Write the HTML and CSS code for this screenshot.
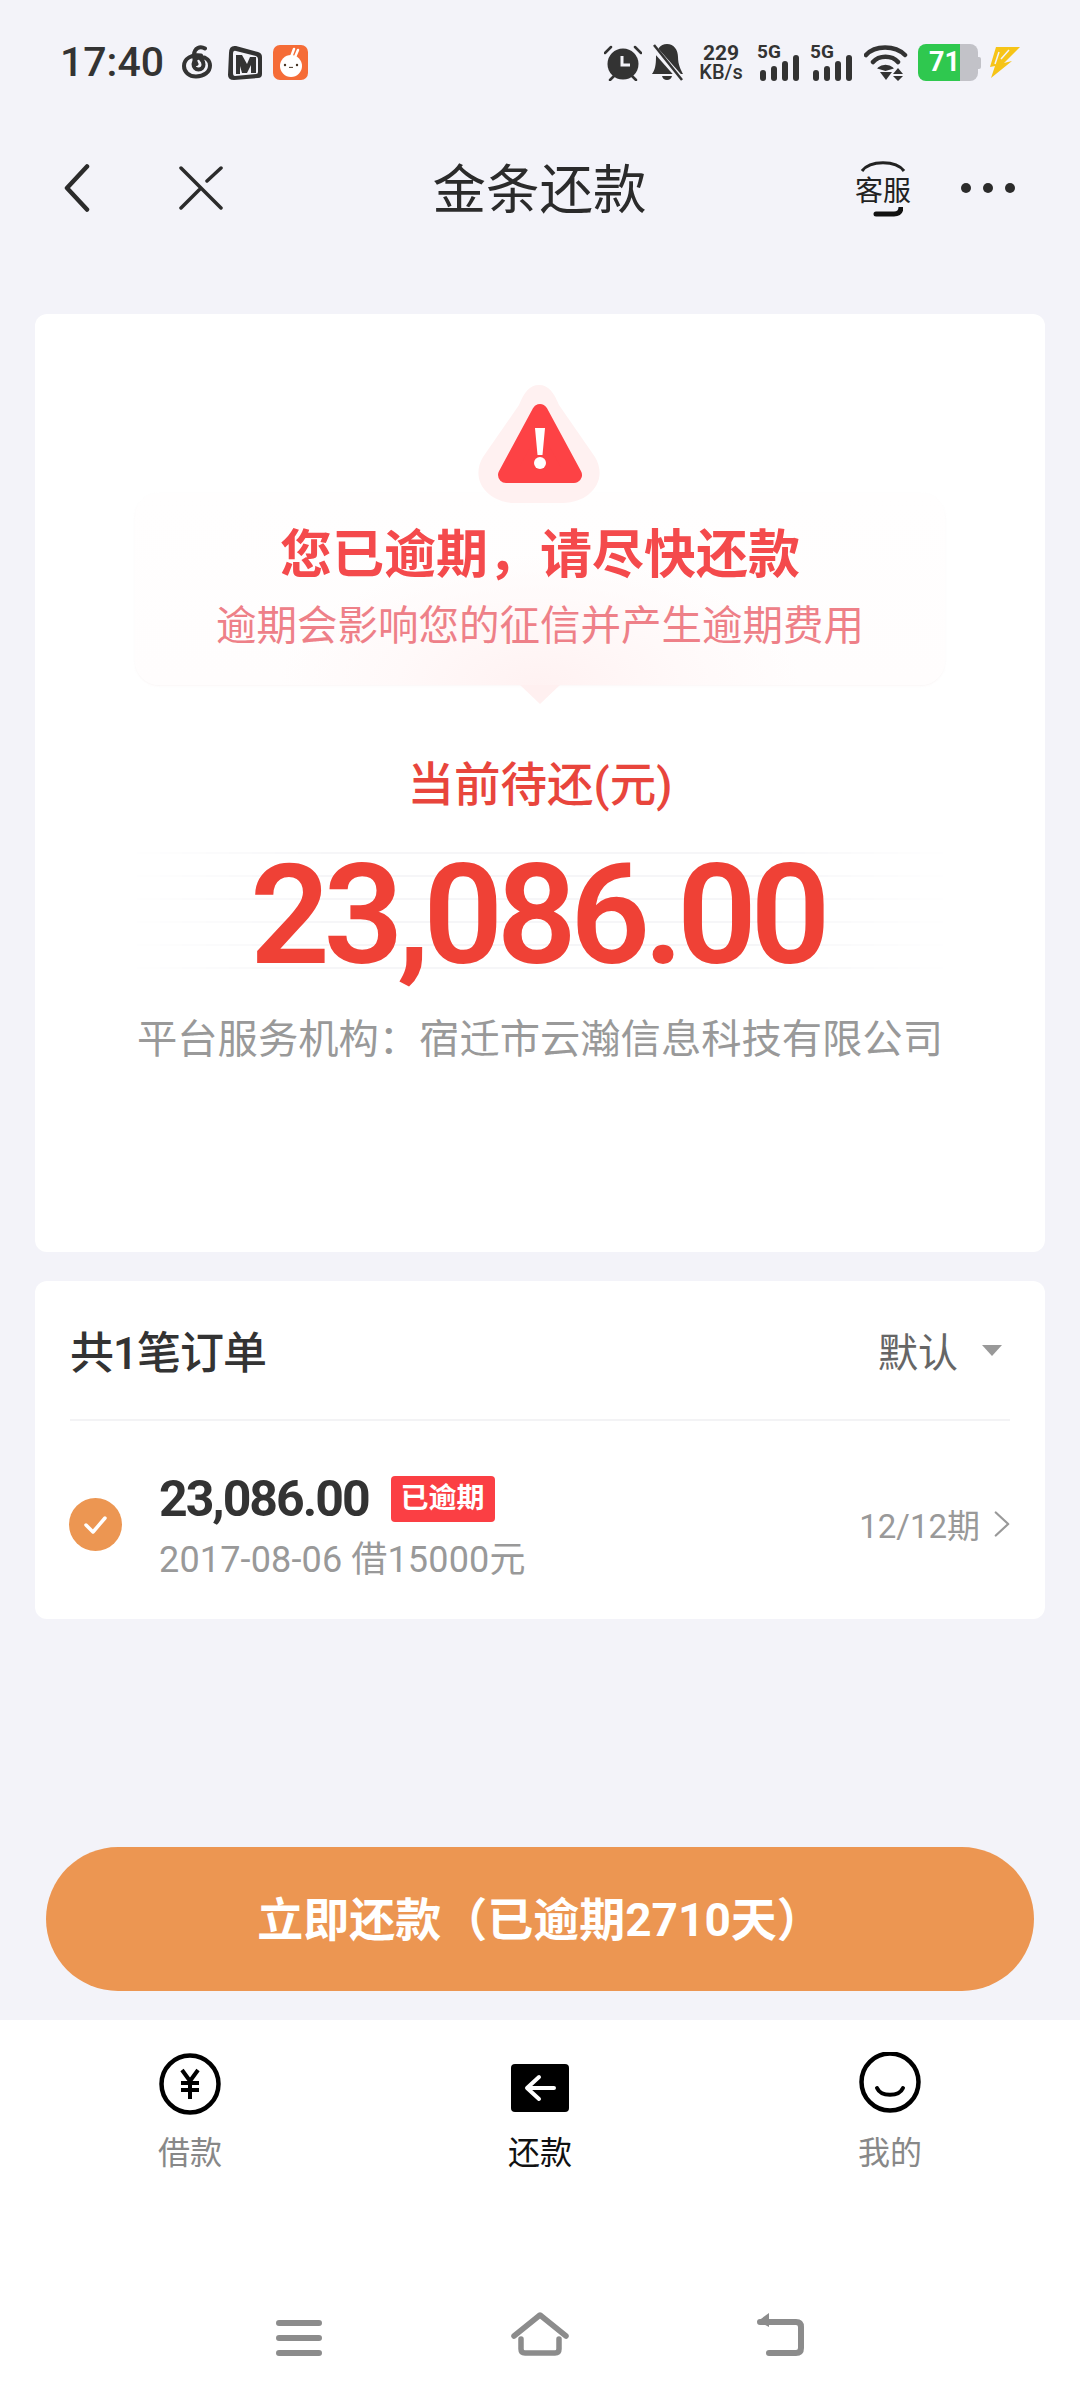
FILE: index.html
```html
<!DOCTYPE html>
<html lang="zh-CN">
<head>
<meta charset="utf-8">
<title>金条还款</title>
<link rel="stylesheet" href="styles.css">
</head>
<body>
<div class="page">
  <header class="status">
    <div class="status-left">
      <span class="time">17:40</span>
      <svg class="ic-swirl" viewBox="0 0 33 34"><path d="M24 3.500C19 .5 13.500 3 13 9.500c-.3 3.500 1 7 2.500 9.500M20 10.500C11 9 3 13.500 3 21c0 6 5 10.500 12 10.500 8 0 14-4.500 14-11 0-5-4-8.500-8.500-8.500-4.500 0-8 3-8 7 0 3 2 5.500 5 5.500s5-2 5-5c0-2-1-4-2.500-5.500" fill="none" stroke="#333" stroke-width="4" stroke-linecap="round"/></svg>
      <svg class="ic-mango" viewBox="0 0 35 35"><path d="M2 8Q2 0 9 1L31 7Q35 8 35 12V29Q35 33 31 33L7 35Q1 35 1 30Z" fill="#333"/><path d="M6 9Q6 5 9 6L29 11Q31 12 31 14V27Q31 29 29 29L8 31Q6 31 6 28Z" fill="#f3f3f9"/><path d="M9 10h6l5 9 3-7h6v16h-5v-8l-4 8-5 0-2-7v8H9Z" fill="#333"/></svg>
      <svg class="ic-rabbit" viewBox="0 0 35 35"><rect width="35" height="35" rx="7" fill="#f56c37"/><path d="M18 12 21 4M22 12 25 5" stroke="#fff" stroke-width="2.500" stroke-linecap="round"/><circle cx="18" cy="21" r="11" fill="#fff"/><circle cx="12" cy="20" r="1.200" fill="#432"/><circle cx="24" cy="20" r="1.200" fill="#432"/><path d="M16 22q1 1.500 2 0q1 1.500 2 0" stroke="#432" fill="none"/></svg>
    </div>
    <div class="status-right">
      <svg class="ic-alarm" viewBox="0 0 38 37"><circle cx="19" cy="20" r="15.500" fill="#333"/><path d="M1 9 7 3M37 9 31 3M6 36l4-4M32 36l-4-4" stroke="#333" stroke-width="2.500" stroke-linecap="round"/><path d="M18 12v9h8" stroke="#f3f3f9" stroke-width="3" fill="none"/></svg>
      <svg class="ic-bell" viewBox="0 0 32 37"><path d="M16 0c7 0 11 6 11 13 0 8 3 13 5 17H1c3-4 4-9 4-17C5 6 9 0 16 0ZM11 32h10q-1 4-5 4t-5-4Z" fill="#333"/><path d="M1 2 31 36" stroke="#f3f3f9" stroke-width="6"/><path d="M3 1 31 36" stroke="#333" stroke-width="2.500"/></svg>
      <div class="speed"><span class="speed-num">229</span><span class="speed-unit">KB/s</span></div>
      <div class="sim">
        <span class="sim-label">5G</span>
        <svg class="ic-bars" viewBox="0 0 40 26"><rect x="0" y="15" width="6" height="11" rx="3" fill="#333"/><rect x="11" y="11" width="6" height="15" rx="3" fill="#333"/><rect x="22" y="6" width="6" height="20" rx="3" fill="#333"/><rect x="33" y="0" width="6" height="26" rx="3" fill="#333"/></svg>
      </div>
      <div class="sim">
        <span class="sim-label">5G</span>
        <svg class="ic-bars" viewBox="0 0 40 26"><rect x="0" y="15" width="6" height="11" rx="3" fill="#333"/><rect x="11" y="11" width="6" height="15" rx="3" fill="#333"/><rect x="22" y="6" width="6" height="20" rx="3" fill="#333"/><rect x="33" y="0" width="6" height="26" rx="3" fill="#333"/></svg>
      </div>
      <svg class="ic-wifi" viewBox="0 0 44 37"><path d="M2 11C11 1 31 1 41 11M9 18C15 11 28 11 34 18" fill="none" stroke="#333" stroke-width="4.500" stroke-linecap="round"/><path d="M15 24C18 21 25 21 28 24L21.500 26Z" fill="#333" stroke="#333" stroke-width="2"/><path d="M16 28h12l-6 8ZM34 24l-5 6h10ZM34 37l-5-5h10Z" fill="#333"/></svg>
      <div class="battery"><span class="bat-level"><span class="bat-text">71</span></span><span class="bat-rest"></span><span class="bat-nub"></span></div>
      <svg class="ic-bolt" viewBox="0 0 30 32"><path d="M6 0H30L14 16 22 14 1 31 5 19 0 20Z" fill="#f6c417"/><path d="M9 5 5 17M19 3 11 12" stroke="#f3f3f9" stroke-width="1.500"/></svg>
    </div>
  </header>

  <nav class="nav">
    <div class="nav-left">
      <svg class="ic-back" viewBox="0 0 26 48"><path d="M23 2.500 3 24l20 21.500" fill="none" stroke="#2b2b2b" stroke-width="4.500" stroke-linecap="round" stroke-linejoin="round"/></svg>
      <svg class="ic-close" viewBox="0 0 44 44"><path d="M2 2 42 42M2 42 21 23M28 15 42 2" fill="none" stroke="#2b2b2b" stroke-width="3.500" stroke-linecap="round"/></svg>
    </div>
    <h1 class="nav-title">金条还款</h1>
    <div class="nav-right">
      <div class="kefu">
        <svg class="kefu-top" viewBox="0 0 46 14"><path d="M2 12C10 1 36 1 44 12" fill="none" stroke="#222" stroke-width="3"/></svg>
        <span class="kefu-text">客服</span>
        <svg class="kefu-bot" viewBox="0 0 32 10"><path d="M30 0c0 5-3 7-7 7H5" fill="none" stroke="#111" stroke-width="5" stroke-linecap="round"/></svg>
      </div>
      <div class="dots"><span class="dot"></span><span class="dot"></span><span class="dot"></span></div>
    </div>
  </nav>

  <section class="card hero">
    <svg class="alert-icon" viewBox="0 0 124 118"><path d="M62 0C72 0 77 8 82 20L118 72C132 96 112 118 86 118H38C12 118-8 96 6 72L42 20C47 8 52 0 62 0Z" fill="#fff1f1"/><path d="M63 27 97 90H29Z" fill="#fd4245" stroke="#fd4245" stroke-width="16" stroke-linejoin="round"/><path d="M58 43h10l-2.500 27h-5Z" fill="#fff"/><circle cx="63" cy="78" r="6" fill="#fff"/></svg>
    <div class="alert-box">
      <h2 class="alert-title">您已逾期，请尽快还款</h2>
      <p class="alert-sub">逾期会影响您的征信并产生逾期费用</p>
    </div>
    <p class="due-label">当前待还(元)</p>
    <div class="due-amount">23,086.00</div>
    <p class="org">平台服务机构：宿迁市云瀚信息科技有限公司</p>
  </section>

  <section class="card orders">
    <div class="orders-head">
      <span class="orders-title">共1笔订单</span>
      <div class="sort"><span>默认</span><span class="sort-caret"></span></div>
    </div>
    <div class="order">
      <svg class="ic-check" viewBox="0 0 53 53"><circle cx="26.500" cy="26.500" r="26.500" fill="#ec9652"/><path d="M17 27l7 7 12-14" fill="none" stroke="#fff" stroke-width="3.500" stroke-linecap="round" stroke-linejoin="round"/></svg>
      <div class="order-main">
        <div class="order-line"><span class="order-amount">23,086.00</span><span class="badge">已逾期</span></div>
        <div class="order-sub">2017-08-06 借15000元</div>
      </div>
      <div class="order-term"><span>12/12期</span><svg class="ic-chev" viewBox="0 0 18 30"><path d="M2 2 16 15 2 28" fill="none" stroke="#999" stroke-width="2.500" stroke-linecap="round" stroke-linejoin="round"/></svg></div>
    </div>
  </section>

  <button class="pay">立即还款（已逾期2710天）</button>

  <footer class="bottom">
    <div class="tabs">
      <div class="tab">
        <svg class="tab-icon" viewBox="0 0 64 64"><circle cx="32" cy="32" r="28.500" fill="none" stroke="#000" stroke-width="4.500"/><path d="M24 18l8 11 8-11M23 31h18M23 38h18M32 29v18" fill="none" stroke="#000" stroke-width="4"/></svg>
        <span class="tab-label">借款</span>
      </div>
      <div class="tab tab-active">
        <svg class="tab-icon" viewBox="0 0 64 64"><rect x="3" y="12" width="58" height="48" rx="4" fill="#000"/><path d="M46 36H20M31 25 19 36 31 47" fill="none" stroke="#fff" stroke-width="4" stroke-linecap="round" stroke-linejoin="round"/></svg>
        <span class="tab-label">还款</span>
      </div>
      <div class="tab">
        <svg class="tab-icon" viewBox="0 0 64 64"><circle cx="32" cy="30" r="28.500" fill="none" stroke="#000" stroke-width="4.500"/><path d="M19 36c4 9 22 9 26 0" fill="none" stroke="#000" stroke-width="4" stroke-linecap="round"/></svg>
        <span class="tab-label">我的</span>
      </div>
    </div>
    <div class="sysnav">
      <svg class="sys-menu" viewBox="0 0 46 36"><path d="M3 3H43M3 18H43M3 33H43" stroke="#8c8c8c" stroke-width="6" stroke-linecap="round"/></svg>
      <svg class="sys-home" viewBox="0 0 58 44"><path d="M3 24 29 3l26 21M10 27v10q0 4 4 4h30q4 0 4-4V27" fill="none" stroke="#8c8c8c" stroke-width="5.500" stroke-linecap="round" stroke-linejoin="round"/></svg>
      <svg class="sys-back" viewBox="0 0 48 44"><path d="M4 10H40q5 0 5 5V36q0 5-5 5H13" fill="none" stroke="#8c8c8c" stroke-width="6" stroke-linecap="round"/><path d="M13 1 2 9l11 6Z" fill="#8c8c8c"/></svg>
    </div>
  </footer>
</div>
</body>
</html>
```
FILE: styles.css
```css
* { box-sizing: border-box; margin: 0; padding: 0; }
html, body { width: 1080px; height: 2400px; }
body {
  font-family: Roboto, "Noto Sans CJK SC", sans-serif;
  color: #333;
  background: #f3f3f9;
  overflow: hidden;
}
.page { width: 1080px; height: 2400px; display: flex; flex-direction: column; background: #f3f3f9; }

/* status bar */
.status { height: 124px; padding: 44px 60px 0 60px; display: flex; justify-content: space-between; align-items: flex-start; }
.status-left { display: flex; align-items: center; height: 36px; }
.time { font-size: 41px; font-weight: 500; line-height: 36px; color: #333; width: 121px; }
.ic-swirl { width: 33px; height: 34px; margin-right: 13px; }
.ic-mango { width: 35px; height: 35px; margin-right: 11px; }
.ic-rabbit { width: 35px; height: 35px; }
.status-right { display: flex; align-items: flex-start; height: 37px; }
.ic-alarm { width: 38px; height: 37px; margin-right: 9px; }
.ic-bell { width: 32px; height: 37px; margin-right: 16px; }
.speed { width: 44px; margin-right: 14px; display: flex; flex-direction: column; align-items: center; gap: 1px; font-weight: 500; color: #333; }
.speed-num { font-size: 21px; line-height: 18px; font-weight: 700; }
.speed-unit { font-size: 20px; line-height: 18px; }
.sim { width: 44px; height: 37px; margin-right: 9px; position: relative; }
.sim-label { position: absolute; left: 0; top: 0; font-size: 19px; line-height: 16px; font-weight: 700; color: #333; }
.ic-bars { position: absolute; left: 3px; bottom: 0; width: 40px; height: 26px; }
.ic-wifi { width: 44px; height: 37px; margin-left: 1px; margin-right: 10px; }
.battery { display: flex; align-items: center; height: 37px; width: 63px; margin-right: 9px; }
.bat-level { width: 42px; height: 37px; background: #2fc84f; border-radius: 8px 0 0 8px; display: flex; justify-content: flex-end; align-items: center; overflow: hidden; }
.bat-text { color: #fff; font-size: 27px; font-weight: 700; line-height: 37px; }
.bat-rest { width: 18px; height: 37px; background: #c2c2c8; border-radius: 0 8px 8px 0; }
.bat-nub { width: 3px; height: 12px; background: #c2c2c8; border-radius: 0 2px 2px 0; }
.ic-bolt { width: 30px; height: 32px; margin-top: 3px; }

/* nav bar */
.nav { height: 128px; padding: 0 65px 0 64px; display: grid; grid-template-columns: 1fr auto 1fr; align-items: center; }
.nav-left { display: flex; align-items: center; gap: 89px; }
.ic-back { width: 26px; height: 48px; }
.ic-close { width: 44px; height: 44px; }
.nav-title { font-size: 53.500px; font-weight: 400; line-height: 64px; margin-top: 5px; color: #2b2b2b; }
.nav-right { display: flex; justify-content: flex-end; align-items: center; }
.kefu { width: 56px; display: flex; flex-direction: column; align-items: center; margin-right: 50px; }
.kefu-top { width: 46px; height: 14px; margin-bottom: 2px; }
.kefu-text { font-size: 28px; line-height: 34px; color: #222; white-space: nowrap; }
.kefu-bot { width: 32px; height: 10px; margin-left: 8px; margin-top: -2px; }
.dots { display: flex; gap: 12px; }
.dot { width: 10px; height: 10px; border-radius: 50%; background: #2b2b2b; }

/* cards */
.card { margin: 0 35px; background: #fff; border-radius: 12px; }
.hero { isolation: isolate; height: 938px; margin-top: 62px; padding-top: 71px; display: flex; flex-direction: column; align-items: center; }
.alert-icon { width: 124px; height: 118px; margin-right: 2px; position: relative; z-index: 1; }
.alert-box {
  position: relative;
  width: 810px;
  height: 192px;
  margin-top: -10px;
  padding-top: 33px;
  text-align: center;
  border-radius: 24px;
  background:
    radial-gradient(ellipse 260px 130px at 50% 100%, #fff2f2 0%, #fff9f9 55%, rgba(255,255,255,0) 100%),
    linear-gradient(#fffefe, #fffdfd);
  box-shadow: 0 1px 2px rgba(240,225,225,.3);
}
.alert-box::after {
  content: "";
  position: absolute;
  left: 50%;
  bottom: -19px;
  width: 40px;
  height: 19px;
  margin-left: -20px;
  background: #fff0f0;
  clip-path: polygon(0 0, 100% 0, 50% 100%);
}
.alert-title { font-size: 52px; font-weight: 700; line-height: 60px; color: #f44a4c; white-space: nowrap; }
.alert-sub { font-size: 40.500px; line-height: 50px; margin-top: 15px; color: #ee8088; white-space: nowrap; }
.due-label { margin-top: 70px; font-size: 46.500px; font-weight: 500; line-height: 60px; color: #e8453c; }
.due-amount {
  position: relative;
  margin-top: 40px;
  width: 830px;
  padding-right: 6px;
  text-align: center;
  font-family: Roboto, sans-serif;
  font-size: 140px;
  font-weight: 600;
  line-height: 120px;
  letter-spacing: -6.500px;
  color: #ef4136;
}
.due-amount::before {
  content: "";
  position: absolute;
  top: -3px;
  bottom: 3px;
  left: 0;
  right: 0;
  z-index: -1;
  background: repeating-linear-gradient(#f6f6f8 0 2px, transparent 2px 23px);
  -webkit-mask-image: linear-gradient(90deg, transparent, #000 25%, #000 75%, transparent);
  mask-image: linear-gradient(90deg, transparent, #000 25%, #000 75%, transparent);
}
.org { margin-top: 35px; font-size: 40.300px; line-height: 60px; color: #999; white-space: nowrap; }

/* orders */
.orders { margin-top: 29px; height: 338px; padding: 0 35px; }
.orders-head { height: 140px; border-bottom: 2px solid #f3f3f5; display: flex; justify-content: space-between; align-items: center; }
.orders-title { font-size: 44px; font-weight: 500; color: #333; letter-spacing: -1px; }
.sort { display: flex; align-items: center; font-size: 40px; color: #666; padding-right: 8px; gap: 24px; }
.sort-caret { width: 0; height: 0; border-left: 10px solid transparent; border-right: 10px solid transparent; border-top: 11px solid #999; }
.order { height: 198px; display: flex; align-items: center; }
.ic-check { width: 53px; height: 53px; margin: 9px 37px 0 -1px; }
.order-main { flex: 1; display: flex; flex-direction: column; padding-top: 14px; }
.order-line { display: flex; align-items: center; height: 52px; }
.order-amount { font-size: 50px; font-weight: 700; letter-spacing: -2px; color: #333; line-height: 52px; }
.badge { margin-left: 22px; width: 104px; height: 46px; border-radius: 4px; background: #fb3f44; color: #fff; font-size: 28px; font-weight: 700; line-height: 46px; text-align: center; white-space: nowrap; }
.order-sub { margin-top: 13px; font-size: 36px; line-height: 44px; letter-spacing: .15px; color: #999; }
.order-term { display: flex; align-items: center; gap: 14px; font-size: 33px; color: #999; margin-top: 7px; }
.ic-chev { width: 16px; height: 30px; }

/* pay button */
.pay {
  display: block;
  margin: 228px 46px 29px;
  padding-bottom: 6px;
  height: 144px;
  width: 988px;
  border: 0;
  border-radius: 72px;
  background: #ec9652;
  color: #fff;
  font-family: Roboto, "Noto Sans CJK SC", sans-serif;
  font-size: 46px;
  font-weight: 700;
}

/* bottom */
.bottom { flex: 1; background: #fff; display: flex; flex-direction: column; padding: 32px 15px 0; }
.tabs { display: grid; grid-template-columns: repeat(3, 350px); }
.tab { display: flex; flex-direction: column; align-items: center; }
.tab-icon { width: 64px; height: 64px; }
.tab-label { margin-top: 15px; font-size: 32px; line-height: 44px; color: #888; }
.tab-active .tab-label { color: #111; }
.sysnav { margin-top: 137px; display: flex; justify-content: center; align-items: flex-end; }
.sys-menu { width: 46px; height: 36px; margin-right: 189px; }
.sys-home { width: 58px; height: 44px; margin-right: 187px; }
.sys-back { width: 48px; height: 44px; }
```
